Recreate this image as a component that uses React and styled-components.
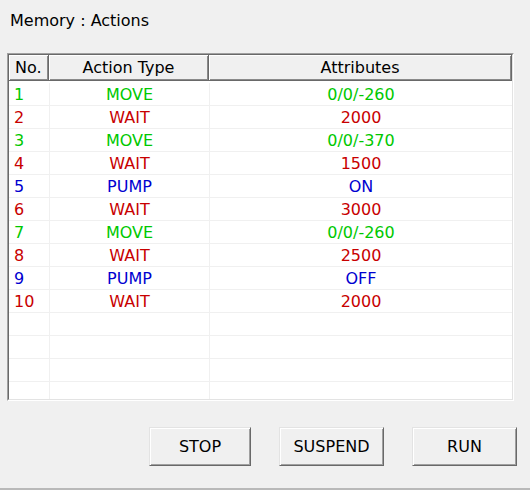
import React from "react";
import styled, { createGlobalStyle } from "styled-components";

const Global = createGlobalStyle`
  html, body { margin: 0; padding: 0; background: #f0f0f0; }
  * { box-sizing: border-box; }
`;

const Window = styled.div`
  width: 530px;
  height: 490px;
  background: #f0f0f0;
  display: flex;
  flex-direction: column;
  font-family: "DejaVu Sans", "Liberation Sans", sans-serif;
  font-size: 16px;
  color: #000;
  overflow: hidden;
`;

const Title = styled.div`
  height: 42px;
  line-height: 42px;
  padding-left: 10px;
`;

const Frame = styled.div`
  margin: 11px 0 0 7px;
  width: 507px;
  height: 348px;
  border: 1px solid;
  border-color: #a0a0a0 #ffffff #ffffff #a0a0a0;
`;

const Inner = styled.div`
  height: 100%;
  border: 1px solid;
  border-color: #696969 #e3e3e3 #e3e3e3 #696969;
  background: #fff;
  overflow: hidden;
  display: flex;
  flex-direction: column;
`;

const columns = "40px 160px 1fr";

const Header = styled.div`
  display: grid;
  grid-template-columns: ${columns};
  height: 26px;
  flex: none;
`;

const HeaderCell = styled.div`
  background: #f0f0f0;
  border-right: 1px solid #696969;
  border-bottom: 1px solid #696969;
  box-shadow: inset 1px 1px 0 #ffffff, inset -1px -1px 0 #8a8a8a;
  padding-top: 2px;
  line-height: 22px;
  text-align: ${(p) => (p.$left ? "left" : "center")};
  padding-left: ${(p) => (p.$left ? "6px" : "0")};
  white-space: nowrap;
`;

const Body = styled.div`
  padding-top: 2px;
  display: flex;
  flex-direction: column;
`;

const Row = styled.div`
  display: grid;
  grid-template-columns: ${columns};
  height: 23px;
  flex: none;
  border-bottom: 1px solid #f0f0f0;
`;

const colors = {
  MOVE: "#00c800",
  WAIT: "#c80000",
  PUMP: "#0000d0",
};

const Cell = styled.div`
  line-height: 22px;
  padding-top: 1px;
  color: ${(p) => p.$color || "#000"};
  text-align: ${(p) => (p.$left ? "left" : "center")};
  padding-left: ${(p) => (p.$left ? "5px" : "0")};
  border-left: ${(p) => (p.$divider ? "1px solid #f0f0f0" : "none")};
  white-space: nowrap;
`;

const Buttons = styled.div`
  display: flex;
  justify-content: flex-end;
  gap: 28px;
  padding-right: 13px;
  margin-top: 26px;
`;

const Button = styled.button`
  width: ${(p) => p.$width}px;
  height: 39px;
  background: #f0f0f0;
  border: 1px solid;
  border-color: #e3e3e3 #696969 #696969 #e3e3e3;
  box-shadow: inset 1px 1px 0 #ffffff, inset -1px -1px 0 #a0a0a0;
  font-family: "DejaVu Sans", "Liberation Sans", sans-serif;
  font-size: 16px;
  color: #000;
  padding: 0;
`;

const BottomBar = styled.div`
  margin-top: auto;
  height: 2px;
  background: #b9b9b9;
`;

const actions = [
  ["MOVE", "0/0/-260"],
  ["WAIT", "2000"],
  ["MOVE", "0/0/-370"],
  ["WAIT", "1500"],
  ["PUMP", "ON"],
  ["WAIT", "3000"],
  ["MOVE", "0/0/-260"],
  ["WAIT", "2500"],
  ["PUMP", "OFF"],
  ["WAIT", "2000"],
];

export default function App() {
  const empty = Array.from({ length: 5 });
  return (
    <Window>
      <Global />
      <Title>Memory : Actions</Title>
      <Frame>
        <Inner>
          <Header>
            <HeaderCell $left>No.</HeaderCell>
            <HeaderCell>Action Type</HeaderCell>
            <HeaderCell>Attributes</HeaderCell>
          </Header>
          <Body>
            {actions.map(([type, attr], i) => (
              <Row key={i}>
                <Cell $left $color={colors[type]}>{i + 1}</Cell>
                <Cell $divider $color={colors[type]}>{type}</Cell>
                <Cell $divider $color={colors[type]}>{attr}</Cell>
              </Row>
            ))}
            {empty.map((_, i) => (
              <Row key={"e" + i}>
                <Cell $left />
                <Cell $divider />
                <Cell $divider />
              </Row>
            ))}
          </Body>
        </Inner>
      </Frame>
      <Buttons>
        <Button $width={102}>STOP</Button>
        <Button $width={105}>SUSPEND</Button>
        <Button $width={105}>RUN</Button>
      </Buttons>
      <BottomBar />
    </Window>
  );
}
